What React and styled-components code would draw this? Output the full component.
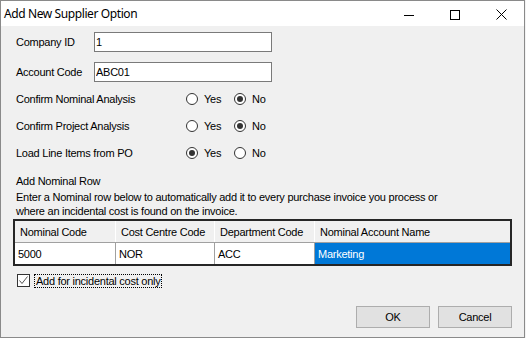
import React from "react";
import styled, { createGlobalStyle } from "styled-components";

const Global = createGlobalStyle`
  html, body { margin: 0; padding: 0; background: #f3f3f3; }
  * { box-sizing: border-box; }
`;

const Window = styled.div`
  width: 525px;
  height: 338px;
  border: 1px solid #8a8a8a;
  background: #f0f0f0;
  display: flex;
  flex-direction: column;
  font-family: "Liberation Sans", Arial, sans-serif;
  font-size: 11px;
  letter-spacing: -0.25px;
  color: #000;
`;

const TitleBar = styled.div`
  height: 25px;
  background: #fff;
  display: flex;
  align-items: center;
  justify-content: space-between;
`;

const Title = styled.div`
  padding-left: 3px;
  font-family: "Noto Sans", "Liberation Sans", sans-serif;
  font-size: 12px;
  letter-spacing: -0.4px;
  color: #000;
`;

const Caption = styled.div`
  display: flex;
  height: 25px;
`;

const CaptionButton = styled.div`
  width: 46px;
  height: 25px;
  display: flex;
  align-items: center;
  justify-content: center;
  padding-top: 2px;
`;

const Body = styled.div`
  flex: 1;
  display: flex;
  flex-direction: column;
  padding: 0 12px 0 15px;
`;

const Row = styled.div`
  display: flex;
  align-items: center;
  height: ${(p) => p.$h || 20}px;
  margin-top: ${(p) => p.$top}px;
`;

const Label = styled.div`
  width: ${(p) => p.$w}px;
  flex: none;
  white-space: nowrap;
`;

const TextBox = styled.input`
  width: 178px;
  height: 20px;
  border: 1px solid #7a7a7a;
  background: #fff;
  padding: 0 0 0 1px;
  font-family: "Liberation Sans", Arial, sans-serif;
  font-size: 11px;
  letter-spacing: -0.25px;
  color: #000;
  outline: none;
`;

const RadioItem = styled.div`
  width: ${(p) => p.$w}px;
  display: flex;
  align-items: center;
`;

const Circle = styled.div`
  width: 12px;
  height: 12px;
  margin-left: 1px;
  border: 1px solid #333;
  border-radius: 50%;
  background: #fff;
  display: flex;
  align-items: center;
  justify-content: center;
  &::after {
    content: "";
    width: 6px;
    height: 6px;
    border-radius: 50%;
    background: ${(p) => (p.$on ? "#333" : "transparent")};
  }
`;

const RadioText = styled.span`
  margin-left: 6px;
`;

const SectionTitle = styled.div`
  margin-top: 11px;
  line-height: 15px;
`;

const Desc = styled.div`
  margin-top: 1px;
  line-height: 14px;
  white-space: nowrap;
`;

const Grid = styled.div`
  margin-top: 1px;
  margin-left: -3px;
  width: 499px;
  border: 2px solid #262626;
  background: #fff;
`;

const GridRow = styled.div`
  display: grid;
  grid-template-columns: 101px 99px 100px 1fr;
  height: ${(p) => (p.$header ? 22 : 21)}px;
  background: ${(p) => (p.$header ? "#f0f0f0" : "#fff")};
  border-bottom: ${(p) => (p.$header ? "1px solid #a0a0a0" : "none")};
`;

const Cell = styled.div`
  display: flex;
  align-items: center;
  padding-left: ${(p) => (p.$header ? 5 : 3)}px;
  border-right: ${(p) =>
    p.$last ? "none" : p.$header ? "1px solid #ffffff" : "1px solid #a0a0a0"};
  background: ${(p) => (p.$selected ? "#0078d7" : "transparent")};
  color: ${(p) => (p.$selected ? "#fff" : "#000")};
  white-space: nowrap;
  overflow: hidden;
`;

const CheckBox = styled.div`
  width: 13px;
  height: 13px;
  margin-left: 1px;
  border: 1px solid #333;
  background: #fff;
  display: flex;
  align-items: center;
  justify-content: center;
`;

const FocusLabel = styled.span`
  margin-left: 4px;
  border: 1px dotted #000;
  padding: 0 1px;
  line-height: 12px;
`;

const ButtonRow = styled.div`
  display: flex;
  justify-content: flex-end;
  gap: 8px;
  margin-top: 18px;
`;

const Button = styled.div`
  width: 74px;
  height: 22px;
  border: 1px solid #adadad;
  background: #e1e1e1;
  display: flex;
  align-items: center;
  justify-content: center;
`;

function Radio({ on, w, children }) {
  return (
    <RadioItem $w={w}>
      <Circle $on={on} />
      <RadioText>{children}</RadioText>
    </RadioItem>
  );
}

function YesNo({ label, yes }) {
  return (
    <Row $top={7}>
      <Label $w={169}>{label}</Label>
      <Radio on={yes} w={48}>Yes</Radio>
      <Radio on={!yes} w={40}>No</Radio>
    </Row>
  );
}

export default function App() {
  return (
    <>
      <Global />
      <Window>
        <TitleBar>
          <Title>Add New Supplier Option</Title>
          <Caption>
            <CaptionButton>
              <svg width="10" height="10" viewBox="0 0 10 10">
                <path d="M0 5.5H10" stroke="#000" strokeWidth="1" />
              </svg>
            </CaptionButton>
            <CaptionButton>
              <svg width="10" height="10" viewBox="0 0 10 10">
                <rect x="0.5" y="0.5" width="9" height="9" fill="none" stroke="#000" strokeWidth="1" />
              </svg>
            </CaptionButton>
            <CaptionButton>
              <svg width="11" height="11" viewBox="0 0 11 11">
                <path d="M0.5 0.5L10.5 10.5M10.5 0.5L0.5 10.5" stroke="#000" strokeWidth="1" />
              </svg>
            </CaptionButton>
          </Caption>
        </TitleBar>
        <Body>
          <Row $top={6}>
            <Label $w={78}>Company ID</Label>
            <TextBox readOnly value="1" />
          </Row>
          <Row $top={10}>
            <Label $w={78}>Account Code</Label>
            <TextBox readOnly value="ABC01" />
          </Row>
          <YesNo label="Confirm Nominal Analysis" yes={false} />
          <YesNo label="Confirm Project Analysis" yes={false} />
          <YesNo label="Load Line Items from PO" yes={true} />
          <SectionTitle>Add Nominal Row</SectionTitle>
          <Desc>
            Enter a Nominal row below to automatically add it to every purchase invoice you process or
            <br />
            where an incidental cost is found on the invoice.
          </Desc>
          <Grid>
            <GridRow $header>
              <Cell $header>Nominal Code</Cell>
              <Cell $header>Cost Centre Code</Cell>
              <Cell $header>Department Code</Cell>
              <Cell $header $last>Nominal Account Name</Cell>
            </GridRow>
            <GridRow>
              <Cell>5000</Cell>
              <Cell>NOR</Cell>
              <Cell>ACC</Cell>
              <Cell $last $selected>Marketing</Cell>
            </GridRow>
          </Grid>
          <Row $top={7} $h={15}>
            <CheckBox>
              <svg width="11" height="11" viewBox="0 0 11 11">
                <path d="M1.5 5.5L4 8.5L9.5 1.5" fill="none" stroke="#555" strokeWidth="1" />
              </svg>
            </CheckBox>
            <FocusLabel>Add for incidental cost only</FocusLabel>
          </Row>
          <ButtonRow>
            <Button>OK</Button>
            <Button>Cancel</Button>
          </ButtonRow>
        </Body>
      </Window>
    </>
  );
}
